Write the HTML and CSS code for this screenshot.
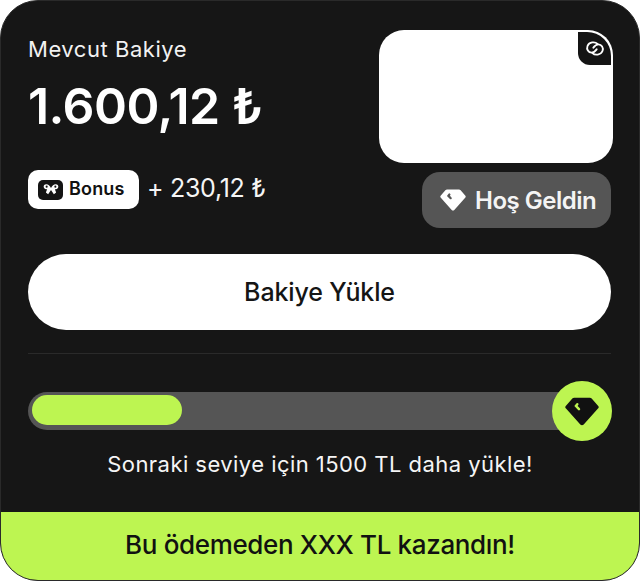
FILE: index.html
```html
<!DOCTYPE html>
<html lang="tr">
<head>
<meta charset="utf-8">
<title>Bakiye</title>
<link rel="stylesheet" href="styles.css">
</head>
<body>
<main class="card">
  <div class="content">
    <section class="top">
      <div class="balance">
        <div class="label">Mevcut Bakiye</div>
        <div class="amount">1.600,12 ₺</div>
        <div class="bonus-row">
          <span class="bonus-pill">
            <span class="bonus-icon">
              <svg width="16" height="13" viewBox="0 0 14 11"><path fill="#fff" d="M7 4.200C6 2 4.600.8 2.900.8 1.300.8.400 2 .6 3.300c.2 1.300 1.400 2 3 2L2.500 8.200l2 1.400L7 5.900l2.500 3.700 2-1.400-1.100-2.900c1.600 0 2.800-.7 3-2C13.600 2 12.700.8 11.100.8 9.400.8 8 2 7 4.200z"/><circle cx="3.200" cy="3" r=".9" fill="#141414"/><circle cx="10.800" cy="3" r=".9" fill="#141414"/></svg>
            </span>
            <span>Bonus</span>
          </span>
          <span class="bonus-value">+ 230,12 ₺</span>
        </div>
      </div>
      <div class="side">
        <div class="card-box">
          <span class="corner">
            <svg width="20" height="17" viewBox="0 0 24 20" fill="none" stroke="#fff" stroke-width="2.200" stroke-linecap="round"><path d="M15 4.500C12 1.500 5 2 3 7c-1.500 4 1 8 5 8 3 0 4.500-2 6-4"/><path d="M9 15.500c3 3 10 2.500 12-2.500 1.500-4-1-8-5-8-3 0-4.500 2-6 4"/></svg>
          </span>
        </div>
        <div class="level-badge">
          <svg class="gem" width="26" height="22" viewBox="0 0 26 22"><path fill="#fff" d="M7 .5h12c.6 0 1 .2 1.400.6l5 5.600c.5.600.5 1.300 0 1.900L14.300 21c-.7.800-1.900.8-2.600 0L.6 8.600c-.5-.6-.5-1.300 0-1.900l5-5.600C6 .7 6.400.5 7 .5z"/><path fill="none" stroke="#555" stroke-width="2.200" stroke-linecap="round" d="M9.400 5.500l-1 1.300 2.300 2.400"/></svg>
          <span>Hoş Geldin</span>
        </div>
      </div>
    </section>
    <button class="load-button">Bakiye Yükle</button>
    <hr class="divider">
    <section class="progress">
      <div class="track"><div class="fill"></div></div>
      <span class="level-dot">
        <svg width="34" height="29" viewBox="0 0 26 22"><path fill="#111" d="M7 .5h12c.6 0 1 .2 1.400.6l5 5.600c.5.600.5 1.300 0 1.900L14.300 21c-.7.800-1.900.8-2.600 0L.6 8.600c-.5-.6-.5-1.300 0-1.900l5-5.600C6 .7 6.400.5 7 .5z"/><path fill="none" stroke="#bdf551" stroke-width="1.900" stroke-linecap="round" d="M9.400 5.500l-1 1.300 2.300 2.400"/></svg>
      </span>
    </section>
    <p class="hint">Sonraki seviye için 1500 TL daha yükle!</p>
  </div>
  <footer class="earned">Bu ödemeden XXX TL kazandın!</footer>
</main>
</body>
</html>
```
FILE: styles.css
```css
* { box-sizing: border-box; }
html, body { margin: 0; padding: 0; background: #fff; }
body { width: 640px; height: 582px; font-family: Inter, "Noto Sans", sans-serif; }
.card {
  width: 640px;
  height: 581px;
  background: #161616;
  border-radius: 38px;
  border: 1px solid #2a2a2a;
  overflow: hidden;
  display: flex;
  flex-direction: column;
  color: #fff;
}
.content { flex: 1; padding: 29px 27px 0; display: flex; flex-direction: column; }
.top { display: flex; justify-content: space-between; }
.balance { padding-top: 5px; }
.label { font-size: 22px; line-height: 28px; color: #f2f2f2; letter-spacing: .55px; }
.amount { font-size: 50px; line-height: 58px; font-weight: 600; margin-top: 14px; letter-spacing: -.55px; }
.bonus-row { display: flex; align-items: center; gap: 8px; margin-top: 35px; }
.bonus-pill {
  width: 111px; height: 39px; background: #fff; color: #111; border-radius: 10px;
  display: flex; align-items: center; gap: 6px; padding-left: 10px;
  font-size: 18px; font-weight: 600; letter-spacing: .15px;
}
.bonus-pill span:last-child { position: relative; top: -1px; }
.bonus-icon {
  width: 25px; height: 20px; background: #141414; border-radius: 5px;
  display: flex; align-items: center; justify-content: center;
}
.bonus-value { font-size: 25px; line-height: 30px; color: #f5f5f5; letter-spacing: -.3px; margin-top: -3px; }
.side { display: flex; flex-direction: column; align-items: flex-end; margin-right: 1px; }
.card-box {
  width: 234px; height: 133px; background: #fff; border-radius: 25px;
  display: flex; justify-content: flex-end; align-items: flex-start;
  overflow: hidden; margin-right: -2px;
}
.corner {
  width: 33px; height: 33px; margin: 2px 2px 0 0; background: #141414;
  border-radius: 0 24px 0 12px;
  display: flex; align-items: center; justify-content: center;
}
.level-badge {
  margin-top: 9px; width: 189px; height: 56px; background: #555; border-radius: 18px;
  display: flex; align-items: center; gap: 9px; padding-left: 18px;
  font-size: 24px; font-weight: 600; color: #f4f4f4; letter-spacing: -.5px;
}
.load-button {
  margin-top: 26px; height: 76px; width: 583px; border: 0; border-radius: 38px;
  background: #fff; color: #151515; font: 500 25px Inter, sans-serif; letter-spacing: -.15px;
}
.divider { margin: 23px 0 0; width: 583px; height: 1px; border: 0; background: #2a2a2a; }
.progress { position: relative; margin-top: 27px; height: 60px; width: 584px; display: flex; align-items: center; }
.track { width: 540px; height: 38px; background: #555; border-radius: 19px 0 0 19px; padding: 3px 4px; }
.fill { width: 150px; height: 30px; background: #bdf551; border-radius: 15px; }
.level-dot {
  position: absolute; right: 0; top: 0; width: 60px; height: 60px; border-radius: 50%;
  background: #bdf551; display: flex; align-items: center; justify-content: center;
}
.hint { margin: 8px 0 0; width: 584px; text-align: center; font-size: 22px; line-height: 30px; color: #f5f5f5; letter-spacing: .45px; }
.earned {
  height: 68px; background: #bdf551; color: #111; text-align: center;
  font-size: 26px; font-weight: 500; line-height: 66px; letter-spacing: -.35px;
}
```
